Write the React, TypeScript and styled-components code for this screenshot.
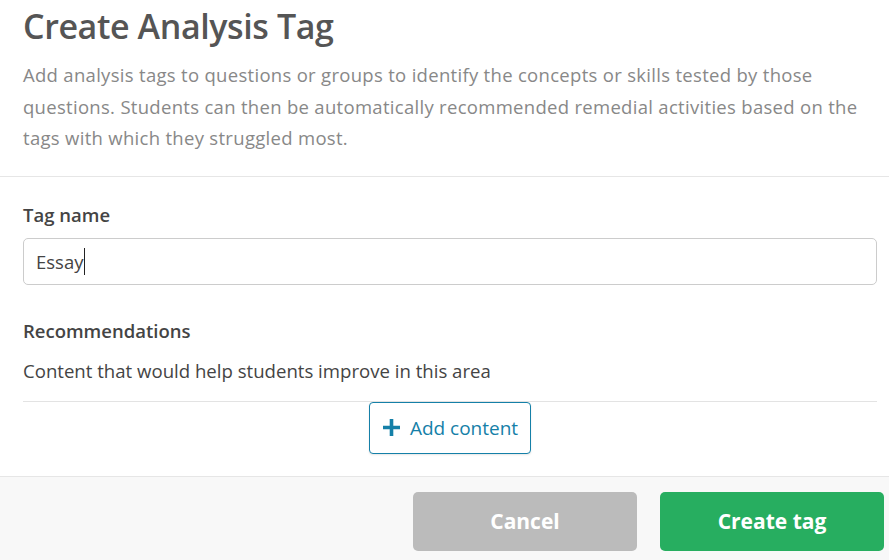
import React from "react";
import styled, { createGlobalStyle } from "styled-components";

const Global = createGlobalStyle`
  html, body { margin: 0; padding: 0; background: #fff; }
  body { font-family: "Open Sans", "Noto Sans", sans-serif; color: #444; }
  * { box-sizing: border-box; }
`;

const Modal = styled.div`
  width: 889px;
  height: 560px;
  display: flex;
  flex-direction: column;
  background: #fff;
  overflow: hidden;
`;

const Header = styled.header`
  padding: 1px 12px 22px 23px;
  border-bottom: 1px solid #e6e6e6;
`;

const Title = styled.h1`
  margin: 0;
  font-size: 34px;
  font-weight: 600;
  color: #555;
  line-height: 50px;
  letter-spacing: -0.4px;
`;

const Lead = styled.p`
  margin: 8px 0 0;
  font-size: 18.5px;
  letter-spacing: 0.3px;
  line-height: 31.5px;
  color: #888888;
  white-space: nowrap;
`;

const Body = styled.section`
  padding: 26px 12px 22px 23px;
  display: flex;
  flex-direction: column;
`;

const Label = styled.label`
  font-size: 18.5px;
  font-weight: 600;
  color: #444;
  line-height: 24px;
`;

const Input = styled.div`
  margin-top: 11px;
  height: 47px;
  border: 1px solid #cccccc;
  border-radius: 5px;
  display: flex;
  align-items: center;
  padding: 0 12px;
  font-size: 18.5px;
  color: #444;
`;

const Caret = styled.span`
  display: inline-block;
  width: 1px;
  height: 27px;
  background: #222;
  margin-left: 1px;
`;

const Section = styled.div`
  margin-top: 34px;
  display: flex;
  flex-direction: column;
`;

const Help = styled.div`
  margin-top: 16px;
  font-size: 18.6px;
  line-height: 24px;
  color: #444;
  padding-bottom: 18px;
  border-bottom: 1px solid #e3e3e3;
`;

const Center = styled.div`
  display: flex;
  justify-content: center;
`;

const AddButton = styled.button`
  display: inline-flex;
  align-items: center;
  gap: 9px;
  height: 52px;
  width: 162px;
  justify-content: center;
  background: #fff;
  border: 1px solid #1580a8;
  border-radius: 4px;
  color: #1580a8;
  font-family: inherit;
  font-size: 19px;
  padding: 0 8px;
  box-shadow: 0 1px 2px rgba(0,0,0,0.1);
`;

const Footer = styled.footer`
  flex: 1;
  background: #f8f8f8;
  border-top: 1px solid #e6e6e6;
  display: flex;
  justify-content: flex-end;
  align-items: flex-start;
  gap: 23px;
  padding: 15px 5px 0 0;
`;

const FooterButton = styled.button<{ $variant: "cancel" | "primary" }>`
  width: 224px;
  height: 59px;
  border: none;
  border-radius: 5px;
  font-family: inherit;
  font-size: 21px;
  font-weight: 700;
  color: #fff;
  background: ${(p) => (p.$variant === "primary" ? "#27ae60" : "#bbbbbb")};
`;

export default function App() {
  return (
    <>
      <Global />
      <Modal>
        <Header>
          <Title>Create Analysis Tag</Title>
          <Lead>
            Add analysis tags to questions or groups to identify the concepts or skills tested by those
            <br />
            questions. Students can then be automatically recommended remedial activities based on the
            <br />
            tags with which they struggled most.
          </Lead>
        </Header>
        <Body>
          <Label>Tag name</Label>
          <Input>
            Essay<Caret />
          </Input>
          <Section>
            <Label>Recommendations</Label>
            <Help>Content that would help students improve in this area</Help>
            <Center>
              <AddButton>
                <svg width="19" height="19" viewBox="0 0 19 19">
                  <path d="M9.5 1v17M1 9.5h17" stroke="#1580a8" strokeWidth="3.6" />
                </svg>
                Add content
              </AddButton>
            </Center>
          </Section>
        </Body>
        <Footer>
          <FooterButton $variant="cancel">Cancel</FooterButton>
          <FooterButton $variant="primary">Create tag</FooterButton>
        </Footer>
      </Modal>
    </>
  );
}
